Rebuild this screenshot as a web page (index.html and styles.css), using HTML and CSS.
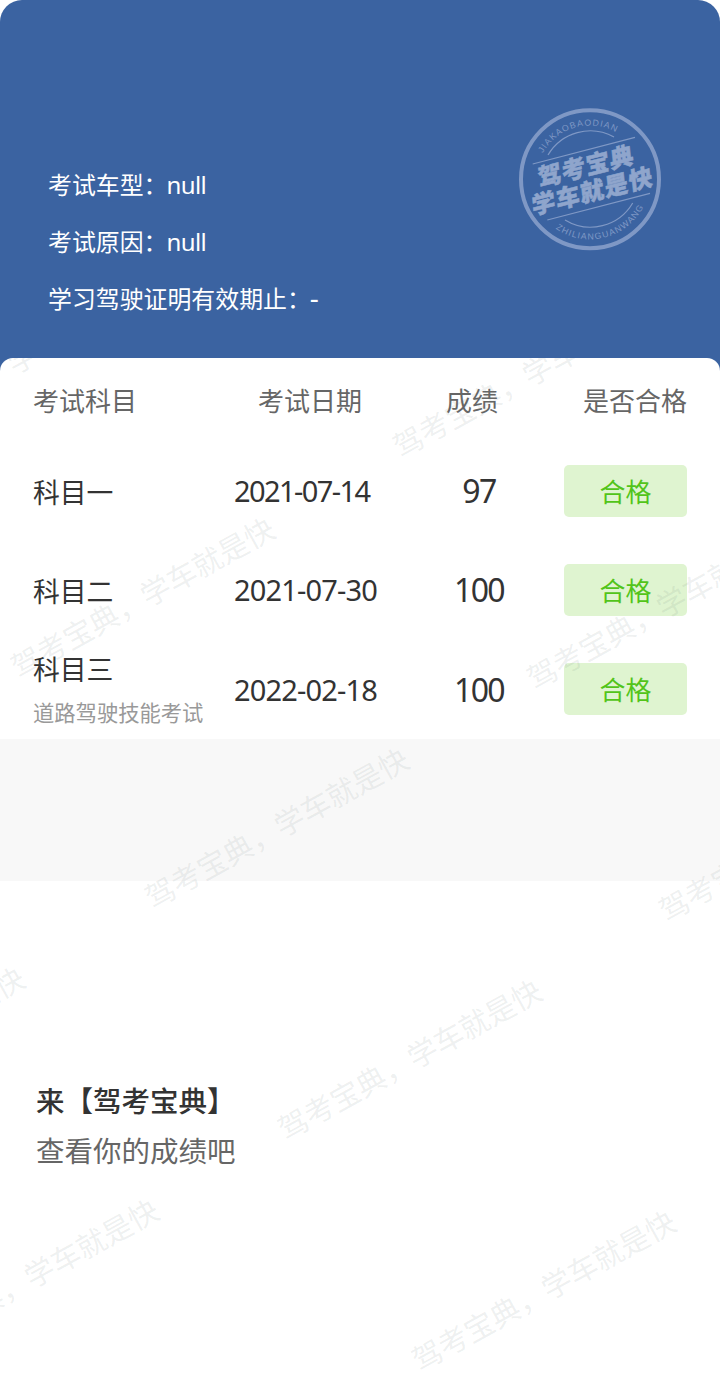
FILE: index.html
```html
<!DOCTYPE html>
<html lang="zh-CN">
<head>
<meta charset="utf-8">
<title>考试成绩</title>
<link rel="stylesheet" href="styles.css">
</head>
<body>
<main class="page">
  <header class="hero">
    <div class="info">
      <p>考试车型：<span class="latin">null</span></p>
      <p>考试原因：<span class="latin">null</span></p>
      <p>学习驾驶证明有效期止：<span class="latin dash">-</span></p>
    </div>
    <svg class="stamp" width="160" height="160" viewBox="0 0 160 160">
      <defs>
        <path id="arc-top" d="M32.8 53.3A54 54 0 0 1 107 32.7"/>
        <path id="arc-bottom" d="M45.6 128.6A60 60 0 0 0 133.9 105.8"/>
      </defs>
      <g class="stamp-lines">
        <circle cx="80" cy="79.2" r="69" stroke-width="4"/>
        <path d="M38 55A49 49 0 0 1 104 37M55 120A49 49 0 0 0 122.7 103M22.7 64L125 37.3M37.3 120L140 93.3"/>
      </g>
      <g class="stamp-small">
        <text textLength="84"><textPath href="#arc-top">JIAKAOBAODIAN</textPath></text>
        <text textLength="102"><textPath href="#arc-bottom">ZHILIANGUANWANG</textPath></text>
      </g>
      <g class="stamp-big">
        <text transform="translate(75.5 66) rotate(-14) skewX(-8)" y="9" textLength="98">驾考宝典</text>
        <text transform="translate(82 91) rotate(-14) skewX(-8)" y="9" textLength="124">学车就是快</text>
      </g>
    </svg>
  </header>
  <section class="sheet">
    <div class="results">
      <div class="row head"><span>考试科目</span><span class="date-head">考试日期</span><span class="score-head">成绩</span><span class="pass-head">是否合格</span></div>
      <div class="row"><div class="subject">科目一</div><div class="date d1">2021-07-14</div><div class="score">97</div><div class="badge">合格</div></div>
      <div class="row"><div class="subject">科目二</div><div class="date d2">2021-07-30</div><div class="score">100</div><div class="badge">合格</div></div>
      <div class="row"><div class="subject">科目三<small>道路驾驶技能考试</small></div><div class="date d3">2022-02-18</div><div class="score">100</div><div class="badge">合格</div></div>
    </div>
    <div class="band"></div>
    <footer class="promo">
      <p class="promo-title">来【驾考宝典】</p>
      <p class="promo-text">查看你的成绩吧</p>
    </footer>
    <svg class="watermark" width="720" height="1015" viewBox="0 358 720 1015">
      <text transform="translate(8.5 364) rotate(-29)">驾考宝典，学车就是快</text>
      <text transform="translate(524 376) rotate(-29)">驾考宝典，学车就是快</text>
      <text transform="translate(142 596.5) rotate(-29)">驾考宝典，学车就是快</text>
      <text transform="translate(658 608) rotate(-29)">驾考宝典，学车就是快</text>
      <text transform="translate(276 827) rotate(-29)">驾考宝典，学车就是快</text>
      <text transform="translate(790 840) rotate(-29)">驾考宝典，学车就是快</text>
      <text transform="translate(-108 1046) rotate(-29)">驾考宝典，学车就是快</text>
      <text transform="translate(409 1058.5) rotate(-29)">驾考宝典，学车就是快</text>
      <text transform="translate(26 1278) rotate(-29)">驾考宝典，学车就是快</text>
      <text transform="translate(543 1289.5) rotate(-29)">驾考宝典，学车就是快</text>
    </svg>
  </section>
</main>
</body>
</html>
```
FILE: styles.css
```css
* { box-sizing: border-box; }
body {
  margin: 0;
  background: #fff;
  font-family: "Noto Sans CJK SC", sans-serif;
  color: #333;
}
p { margin: 0; }
.page { width: 720px; height: 1373px; overflow: hidden; }
.hero {
  display: flex;
  justify-content: space-between;
  height: 380px;
  padding: 100px 50px 0 48px;
  border-radius: 22px 22px 0 0;
  background: #3b63a1;
}
.info { padding-top: 55px; color: #fff; font-size: 23.9px; line-height: 57.2px; white-space: nowrap; }
.latin { margin-left: -1px; font-family: "Noto Sans", sans-serif; font-size: 24px; line-height: 1; letter-spacing: -.6px; }
.dash { font-size: 28px; }
.stamp { flex: none; }
.stamp-lines { fill: none; stroke: #7f98c5; stroke-width: 1.2; }
.stamp-small { fill: #7f98c5; font: 8.8px "Liberation Sans", sans-serif; }
.stamp-big {
  fill: #8fa5cc;
  stroke: #8fa5cc;
  stroke-width: .5;
  font-size: 24px;
  font-weight: 900;
  text-anchor: middle;
}
.sheet {
  position: relative;
  height: 1015px;
  margin-top: -22px;
  border-radius: 13px 13px 0 0;
  overflow: hidden;
  background: #fff;
}
.results { height: 381px; padding: 0 33px; }
.row {
  display: grid;
  grid-template-columns: 201px 166px 164px 123px;
  align-items: center;
  height: 99.3px;
  white-space: nowrap;
}
.row.head { height: 83px; padding-bottom: 1px; font-size: 26px; color: #666; }
.date-head { padding-left: 24px; }
.score-head { padding-left: 46px; }
.pass-head { text-align: right; }
.subject { padding-top: 2px; font-size: 26.8px; line-height: 40px; }
.subject small { display: block; font-size: 21.3px; line-height: 40px; color: #999; margin-top: 3px; }
.date { font: 29px "Noto Sans", sans-serif; letter-spacing: -.85px; }
.d1 { letter-spacing: -1.6px; }
.score { width: 158px; text-align: center; font: 32px "Noto Sans", sans-serif; letter-spacing: -1.6px; }
.badge {
  height: 52px;
  border-radius: 5px;
  background: #dff4d0;
  color: #52c41a;
  font-size: 26px;
  line-height: 51px;
  text-align: center;
}
.band { height: 142px; background: #f8f8f8; }
.promo { padding: 194px 36px 0; font-size: 28.5px; line-height: 50px; }
.promo-title { font-weight: 500; }
.promo-text { color: #666; }
.watermark { position: absolute; left: 0; top: 0; }
.watermark text {
  fill: rgba(90, 110, 110, .1);
  font-size: 29.6px;
  text-anchor: middle;
  dominant-baseline: central;
}
```
